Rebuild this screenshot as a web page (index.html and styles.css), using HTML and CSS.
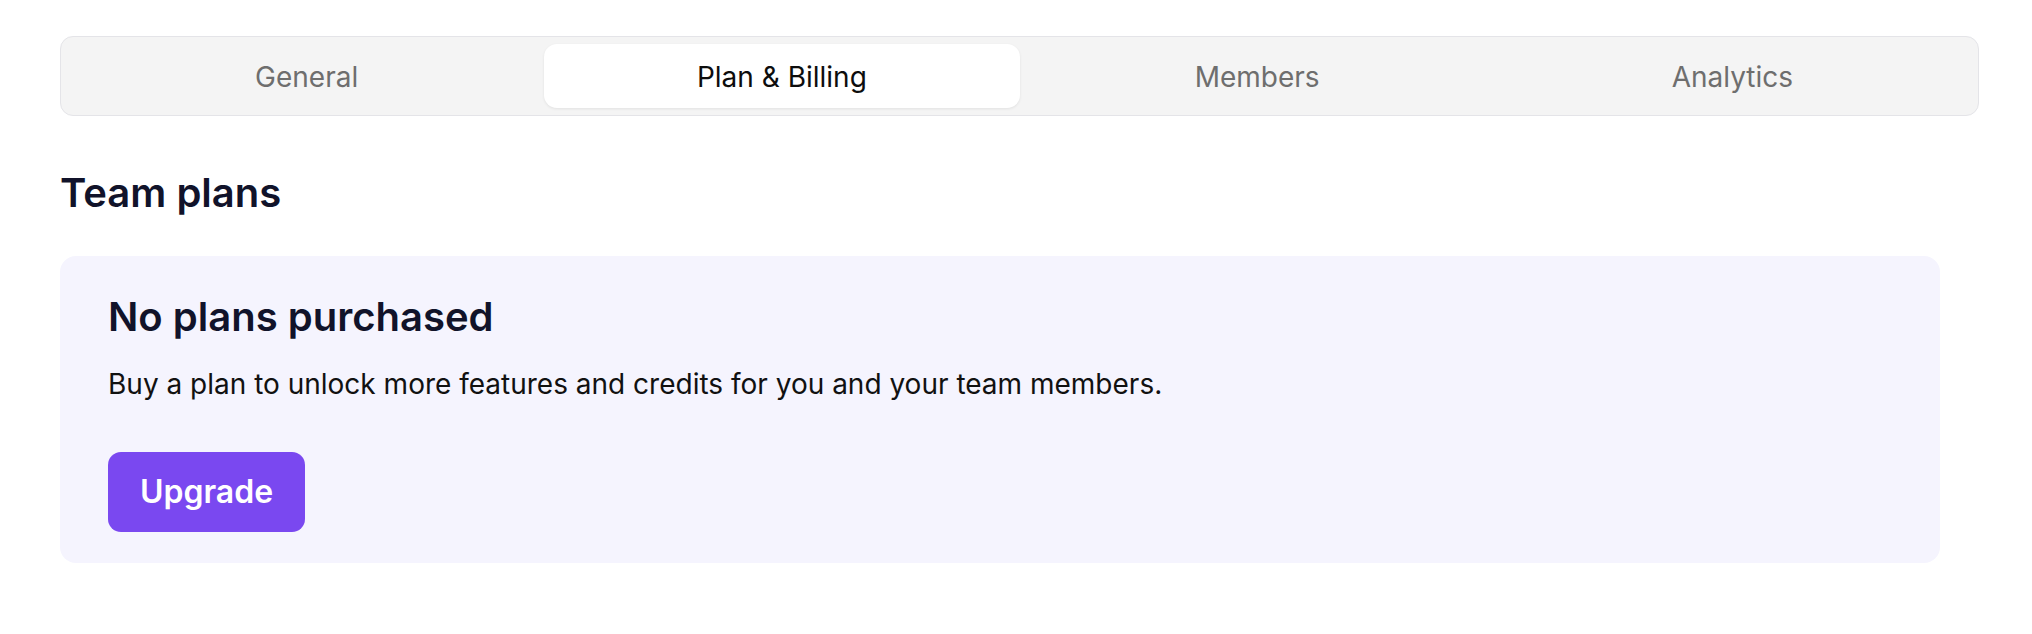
FILE: index.html
```html
<!DOCTYPE html>
<html lang="en">
<head>
<meta charset="utf-8">
<title>Plan &amp; Billing</title>
<link rel="stylesheet" href="styles.css">
</head>
<body>
<main class="page">
  <nav class="tabs">
    <div class="tab">General</div>
    <div class="tab tab-active">Plan &amp; Billing</div>
    <div class="tab">Members</div>
    <div class="tab">Analytics</div>
  </nav>
  <h1 class="section-title">Team plans</h1>
  <section class="card">
    <h2 class="card-title">No plans purchased</h2>
    <p class="card-text">Buy a plan to unlock more features and credits for you and your team members.</p>
    <button class="btn-upgrade" type="button">Upgrade</button>
  </section>
</main>
</body>
</html>
```
FILE: styles.css
```css
* { box-sizing: border-box; }
html, body { margin: 0; padding: 0; background: #ffffff; }
body { font-family: Inter, "Noto Sans", sans-serif; color: #111111; }
.page {
  padding: 36px 0 0 60px;
  width: 1980px;
}
.tabs {
  display: grid;
  grid-template-columns: repeat(4, 1fr);
  width: 1919px;
  height: 80px;
  padding: 7px 8px;
  background: #f4f4f4;
  border: 1px solid #e4e4e8;
  border-radius: 13px;
}
.tab {
  display: flex;
  align-items: center;
  justify-content: center;
  padding-top: 2px;
  font-size: 28px;
  color: #6e6e6e;
  border-radius: 13px;
}
.tab-active {
  background: #ffffff;
  color: #0d0d0d;
  box-shadow: 0 1px 3px rgba(0, 0, 0, 0.08);
}
.section-title {
  margin: 53px 0 0 0;
  font-size: 40px;
  font-weight: 600;
  line-height: 48px;
  color: #11132a;
}
.card {
  margin-top: 39px;
  width: 1880px;
  height: 307px;
  padding: 37px 48px 0 48px;
  background: #f5f4fe;
  border-radius: 16px;
}
.card-title {
  margin: 0;
  font-size: 40px;
  font-weight: 600;
  line-height: 48px;
  color: #11132a;
}
.card-text {
  margin: 25px 0 0 0;
  font-size: 28px;
  line-height: 36px;
  color: #111111;
}
.btn-upgrade {
  margin-top: 50px;
  width: 197px;
  height: 80px;
  padding: 0;
  border: none;
  border-radius: 13px;
  background: #7a48f0;
  color: #ffffff;
  font-family: Inter, "Noto Sans", sans-serif;
  font-size: 32px;
  font-weight: 600;
  line-height: 78px;
}
```
